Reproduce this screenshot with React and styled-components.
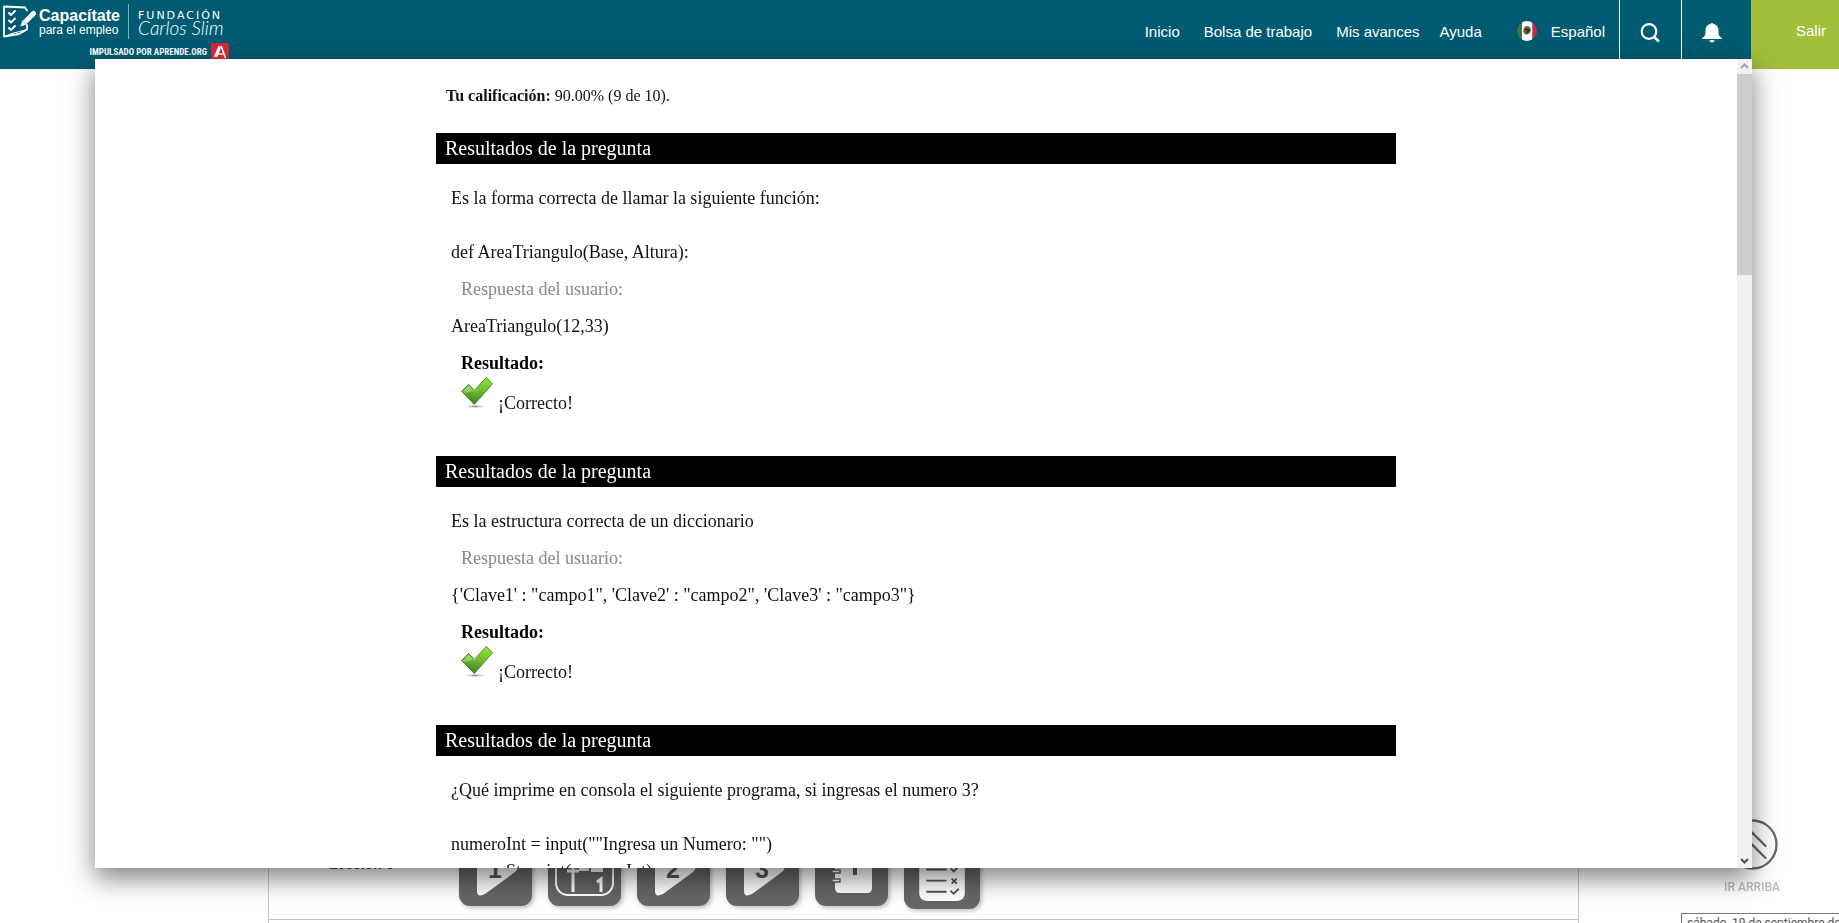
import React from "react";
import styled, { createGlobalStyle } from "styled-components";

const Global = createGlobalStyle`
  * { box-sizing: border-box; }
  html, body, #root { height: 100%; }
  body { margin: 0; overflow: hidden; background: #fff; font-family: "Liberation Sans", Arial, sans-serif; }
  p, h2 { margin: 0; }
`;

const Page = styled.div`
  display: flex;
  flex-direction: column;
  height: 100%;
`;

/* Site header */
const Header = styled.header`
  display: flex;
  flex: none;
  height: 69px;
  background: #005b72;
  color: #fff;
`;
const Brand = styled.a`
  display: flex;
  flex-direction: column;
  width: 232px;
  color: #fff;
  text-decoration: none;
`;
const BrandRow = styled.span`
  display: flex;
  height: 42px;
  padding: 4px 0 0 3px;
`;
const BrandName = styled.span`
  display: flex;
  flex-direction: column;
  width: 92px;
  padding: 4px 0 0 3px;
  font-size: 12px;
  line-height: 14px;
  white-space: nowrap;
`;
const BrandStrong = styled.strong`
  font-size: 16px;
  line-height: 15px;
`;
const Foundation = styled.span`
  display: flex;
  flex-direction: column;
  height: 35px;
  padding: 5px 0 0 9px;
  border-left: 1px solid #7fadb8;
  font-family: "DejaVu Sans", sans-serif;
  font-size: 11px;
  line-height: 13px;
  letter-spacing: 2px;
  white-space: nowrap;
`;
const Signature = styled.em`
  font-family: "Lato", sans-serif;
  font-size: 19px;
  font-weight: 300;
  line-height: 12px;
  letter-spacing: 0;
`;
const Powered = styled.span`
  display: flex;
  justify-content: flex-end;
  gap: 4px;
  width: 229px;
  padding-top: 1px;
  font-family: "Liberation Sans Narrow", "Roboto Condensed", "Open Sans Condensed", "Roboto", sans-serif;
  font-weight: 700;
  font-size: 9px;
  line-height: 18px;
  white-space: nowrap;
`;
const Nav = styled.nav`
  display: flex;
  align-items: center;
  gap: 20px;
  margin-left: auto;
  padding: 0 14px 7px 0;
  font-size: 15px;
`;
const NavLink = styled.a`
  margin-right: ${(p) => (p.$wide ? 4 : 0)}px;
  color: #fff;
  text-decoration: none;
  white-space: nowrap;
`;
const Language = styled.button`
  display: flex;
  align-items: center;
  gap: 14px;
  margin-left: 15px;
  padding: 0;
  border: 0;
  background: none;
  color: #fff;
  font: inherit;
`;
const IconButton = styled.button`
  display: flex;
  justify-content: center;
  width: ${(p) => p.$width}px;
  padding: 22px ${(p) => p.$inset}px 0 0;
  border: 0;
  border-left: 1px solid #fff;
  background: none;
`;
const Logout = styled.a`
  width: 88px;
  padding: 22px 0 0 45px;
  background: #a1be3c;
  color: #fff;
  font-size: 15px;
  line-height: 18px;
  text-decoration: none;
`;

/* Course page behind the dialog */
const Course = styled.main`
  display: flex;
  flex: 1;
  flex-direction: column;
  justify-content: flex-end;
  margin: 0 260px 0 268px;
  padding-bottom: 3px;
  border: solid #c6c6c6;
  border-width: 0 1px;
`;
const Lesson = styled.section`
  display: flex;
  height: 101px;
  padding: 14px 0 0 60px;
  border-bottom: 1px solid #c6c6c6;
`;
const LessonName = styled.h2`
  width: 130px;
  padding-top: 22px;
  color: #444;
  font-size: 14px;
  line-height: 18px;
`;
const Activities = styled.div`
  display: flex;
  align-items: flex-start;
  gap: 16px;
`;
const Activity = styled.button`
  width: ${(p) => p.$size}px;
  height: ${(p) => p.$size}px;
  padding: 0;
  border: 0;
  border-radius: 11px;
  background: #666;
  box-shadow: 2px 2px 4px rgba(0, 0, 0, 0.25);
  svg { display: block; width: 100%; height: 100%; }
`;
const ToTop = styled.a`
  position: fixed;
  right: 59px;
  bottom: 29px;
  display: flex;
  flex-direction: column;
  align-items: center;
  gap: 10px;
  color: #bbb;
  font: 500 12px/14px "Roboto", sans-serif;
  text-decoration: none;
`;
const Hint = styled.div`
  position: fixed;
  top: calc(100% - 10px);
  left: calc(100% - 158px);
  padding: 1px 5px;
  border: 1px solid #767676;
  background: #fff;
  color: #575757;
  font: 12px/16px "Roboto", sans-serif;
  white-space: nowrap;
`;

/* Results dialog */
const Dialog = styled.div`
  position: fixed;
  inset: 59px 87px 55px 95px;
  display: flex;
  background: #fff;
  box-shadow: 0 10px 25px rgba(0, 0, 0, 0.5);
`;
const Viewport = styled.div`
  flex: 1;
  overflow: hidden;
`;
const Results = styled.div`
  max-width: 960px;
  margin: 0 auto;
  padding-top: 23px;
  color: #111;
  font-family: "Liberation Serif", "Times New Roman", serif;
  font-size: 18px;
  line-height: 27px;
`;
const Score = styled.p`
  height: 51px;
  padding-left: 10px;
  font-size: 16px;
`;
const Question = styled.section`
  display: flex;
  flex-direction: column;
`;
const QuestionTitle = styled.h2`
  margin-bottom: 21px;
  padding: 0 9px;
  background: #000;
  color: #fff;
  font-size: 20px;
  font-weight: 400;
  line-height: 31px;
`;
const Paragraph = styled.p`
  min-height: 27px;
  margin-bottom: 10px;
  padding-left: 15px;
  white-space: pre-line;
`;
const Label = styled.p`
  margin-bottom: ${(p) => (p.$strong ? 0 : 10)}px;
  padding-left: 25px;
  color: ${(p) => (p.$strong ? "#000" : "#888")};
  font-weight: ${(p) => (p.$strong ? 700 : 400)};
`;
const Verdict = styled.p`
  display: flex;
  align-items: flex-start;
  gap: 5px;
  height: 79px;
  padding-left: 25px;
`;
const VerdictText = styled.span`
  padding-top: 13px;
`;
const Scrollbar = styled.div`
  display: flex;
  flex-direction: column;
  width: 15px;
  background: #f1f1f1;
`;
const ScrollButton = styled.button`
  display: block;
  height: 15px;
  padding: 0;
  border: 0;
  background: none;
  svg { display: block; }
`;
const Thumb = styled.div`
  height: 201px;
  margin-bottom: auto;
  background: #cdcdcd;
`;

const Logo = () => (
  <svg width="33" height="35" viewBox="0 0 33 35" fill="none" stroke="#fff" strokeWidth="1.8" strokeLinecap="round" strokeLinejoin="round">
    <path d="M22 3.500 1 2.500v30l15-2.500 8-4.500V21M24 6.500 22 3.500" />
    <path d="M2 32.500q8-4 15-5l7-2" strokeWidth="1.200" />
    <path d="m6 9 2 2 4-4M6 16.500l2 2 4-4M6 24l2 2 4-4" />
    <path d="M30.500 9.500 21.500 18.500" strokeWidth="5" strokeLinecap="butt" />
    <path d="m30.500 9.500-.5.500" strokeWidth="5" />
    <path d="m19.500 17 3.500 3.500-5 1.500Z" fill="#fff" strokeWidth=".5" />
  </svg>
);
const AprendeMark = () => (
  <svg width="18" height="18" viewBox="0 0 18 18">
    <rect width="18" height="20" rx="2.500" fill="#dd2736" />
    <path d="M3.500 14 8 4h2.500L14.500 15M5.500 14 9 5M5 11h8" fill="none" stroke="#fff" strokeWidth="1.700" />
  </svg>
);
const Flag = () => (
  <svg width="20" height="20" viewBox="0 0 20 20">
    <defs><clipPath id="flag"><circle cx="10" cy="10" r="10" /></clipPath></defs>
    <g clipPath="url(#flag)">
      <path d="M0 0h5v20H0z" fill="#3f7445" />
      <path d="M5 0h10.500v20H5z" fill="#fff" />
      <path d="M15.500 0H20v20h-4.500z" fill="#d32645" />
    </g>
    <path d="M7 7q2-3 5-1.500 2.500 1.500 1.500 5-1.500 3.500-5 3Q5 12 7 7Z" fill="#6b6148" />
    <path d="M8 8l4 1-2 3" fill="none" stroke="#382a1b" strokeWidth="1.500" />
  </svg>
);
const SearchIcon = () => (
  <svg width="20" height="21" viewBox="0 0 20 21" fill="none" stroke="#fff" strokeWidth="2.200">
    <circle cx="9" cy="9.500" r="7.300" /><path d="m14 15 5 4.500" strokeWidth="2.600" />
  </svg>
);
const BellIcon = () => (
  <svg width="20" height="21" viewBox="0 0 20 21" fill="#fff">
    <path d="M8.500 2q1.500-2 3 0c3.500.7 5 3 5 6.500 0 4.500.5 6 3.500 7.500v1H0v-1c3-1.500 3.500-3 3.500-7.500C3.500 5 5 2.700 8.500 2ZM7.500 18h5q-.5 2.500-2.500 2.500T7.500 18Z" />
  </svg>
);
const Check = () => (
  <svg width="32" height="33" viewBox="0 0 32 33">
    <defs>
      <linearGradient id="leaf" x1=".6" y1="0" x2=".4" y2="1">
        <stop offset="0" stopColor="#92e43b" /><stop offset=".5" stopColor="#6dbb2c" /><stop offset="1" stopColor="#3f7c1d" />
      </linearGradient>
      <radialGradient id="ground"><stop offset="0" stopColor="#777" /><stop offset="1" stopColor="#fff" stopOpacity="0" /></radialGradient>
    </defs>
    <ellipse cx="14" cy="29.500" rx="13" ry="2" fill="url(#ground)" />
    <path d="m.7 14.500 6.800-7.200 6 6L25.300.5l6.200 6.300L13.300 27.500Z" fill="url(#leaf)" stroke="#437f20" strokeWidth=".9" />
    <path d="m2 14.500 5.500-5.700 6 6L20 8q-4 6-16.500 8Z" fill="#fff" opacity=".3" />
  </svg>
);
const PlayIcon = ({ n }) => (
  <svg viewBox="0 0 73 73">
    <path d="M18 13q0-7 6-4l32 22q5 4 0 8L26 61q-8 4-8-3Z" fill="#fff" />
    <text x="36" y="45" textAnchor="middle" fill="#555" fontSize="25" fontWeight="700" fontFamily="Liberation Sans">{n}</text>
  </svg>
);
const BoardIcon = () => (
  <svg viewBox="0 0 73 73" fill="none" stroke="#fff" strokeWidth="2">
    <rect x="8" y="10" width="57" height="52" rx="12" />
    <path d="M25 59V35M19 38h12" strokeWidth="3" />
    <path d="M31 34h10v4H31zM43 35h12v4H43z" fill="#fff" stroke="none" />
    <path d="m49 49 4-3v13" strokeWidth="3" />
  </svg>
);
const NotebookIcon = () => (
  <svg viewBox="0 0 73 73">
    <path d="M20 14q0-5 5-5h27q5 0 5 5v41q0 5-5 5H25q-5 0-5-5Z" fill="#fff" />
    <path d="M17 37h8v3h-8zM17 46h8v3h-8z" fill="#fff" stroke="#666" strokeWidth="1.500" />
    <path d="m35 27 5-3v18" fill="none" stroke="#555" strokeWidth="4" />
  </svg>
);
const QuizIcon = () => (
  <svg viewBox="0 0 75 75">
    <rect x="15" y="7" width="45" height="60" rx="7" fill="#fff" />
    <path d="M22 24h20M22 36h20M22 47h20M22 58h20M46 35l3 3 5-5M46 57l3 3 5-5M47 45l5 5M52 45l-5 5" fill="none" stroke="#555" strokeWidth="1.800" />
  </svg>
);
const ArrowUp = () => (
  <svg width="51" height="51" viewBox="0 0 51 51" fill="none" stroke="#666" strokeWidth="2.300" strokeLinecap="round">
    <circle cx="25.500" cy="25.500" r="24" /><path d="m12.500 27 13-13 13 13M12.500 39l13-13 13 13" />
  </svg>
);

const questions = [
  { text: "Es la forma correcta de llamar la siguiente función:\n\ndef AreaTriangulo(Base, Altura):", answer: "AreaTriangulo(12,33)" },
  { text: "Es la estructura correcta de un diccionario", answer: "{'Clave1' : \"campo1\", 'Clave2' : \"campo2\", 'Clave3' : \"campo3\"}" },
  { text: "¿Qué imprime en consola el siguiente programa, si ingresas el numero 3?\n\nnumeroInt = input(\"\"Ingresa un Numero: \"\")\nnumeroStr = int(numeroInt)" },
];

const activities = [
  { label: "Video 1", size: 73, icon: <PlayIcon n="1" /> },
  { label: "Infografía 1", size: 73, icon: <BoardIcon /> },
  { label: "Video 2", size: 73, icon: <PlayIcon n="2" /> },
  { label: "Video 3", size: 73, icon: <PlayIcon n="3" /> },
  { label: "Cuaderno 1", size: 73, icon: <NotebookIcon /> },
  { label: "Evaluación", size: 76, icon: <QuizIcon /> },
];

export default function App() {
  return (
    <Page>
      <Global />
      <Header>
        <Brand href="#inicio">
          <BrandRow>
            <Logo />
            <BrandName><BrandStrong>Capacítate</BrandStrong>para el empleo</BrandName>
            <Foundation>FUNDACIÓN<Signature>Carlos Slim</Signature></Foundation>
          </BrandRow>
          <Powered>IMPULSADO POR APRENDE.ORG<AprendeMark /></Powered>
        </Brand>
        <Nav>
          <NavLink href="#inicio" $wide>Inicio</NavLink>
          <NavLink href="#bolsa" $wide>Bolsa de trabajo</NavLink>
          <NavLink href="#avances">Mis avances</NavLink>
          <NavLink href="#ayuda">Ayuda</NavLink>
          <Language type="button"><Flag />Español</Language>
        </Nav>
        <IconButton type="button" aria-label="Buscar" $width={62} $inset={2}><SearchIcon /></IconButton>
        <IconButton type="button" aria-label="Notificaciones" $width={70} $inset={10}><BellIcon /></IconButton>
        <Logout href="#salir">Salir</Logout>
      </Header>
      <Course>
        <Lesson>
          <LessonName>Lección 5</LessonName>
          <Activities>
            {activities.map((a) => (
              <Activity key={a.label} type="button" aria-label={a.label} $size={a.size}>{a.icon}</Activity>
            ))}
          </Activities>
        </Lesson>
      </Course>
      <ToTop href="#arriba"><ArrowUp />IR ARRIBA</ToTop>
      <Dialog role="dialog" aria-label="Resultados">
        <Viewport>
          <Results>
            <Score><b>Tu calificación:</b> 90.00% (9 de 10).</Score>
            {questions.map((q) => (
              <Question key={q.text}>
                <QuestionTitle>Resultados de la pregunta</QuestionTitle>
                <Paragraph>{q.text}</Paragraph>
                {q.answer && (
                  <>
                    <Label>Respuesta del usuario:</Label>
                    <Paragraph>{q.answer}</Paragraph>
                    <Label $strong>Resultado:</Label>
                    <Verdict><Check /><VerdictText>¡Correcto!</VerdictText></Verdict>
                  </>
                )}
              </Question>
            ))}
          </Results>
        </Viewport>
        <Scrollbar>
          <ScrollButton type="button" aria-label="Subir">
            <svg width="15" height="15" fill="none" stroke="#a3a3a3" strokeWidth="2"><path d="m4 9 3.500-3.500L11 9" /></svg>
          </ScrollButton>
          <Thumb />
          <ScrollButton type="button" aria-label="Bajar">
            <svg width="15" height="15" fill="none" stroke="#505050" strokeWidth="2"><path d="m4 6 3.500 3.500L11 6" /></svg>
          </ScrollButton>
        </Scrollbar>
      </Dialog>
      <Hint role="tooltip">sábado, 19 de septiembre de 2020</Hint>
    </Page>
  );
}
